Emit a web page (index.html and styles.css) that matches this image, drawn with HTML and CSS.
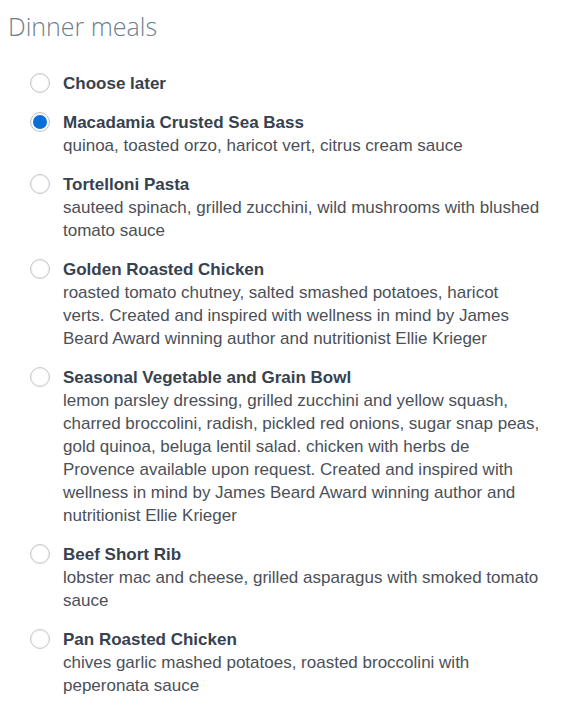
FILE: index.html
```html
<!DOCTYPE html>
<html>
<head>
<meta charset="utf-8">
<link rel="stylesheet" href="styles.css">
</head>
<body>
<h2 class="heading">Dinner meals</h2>
<div class="options">
  <label class="option">
    <span class="radio"></span>
    <span class="text"><span class="name">Choose later</span></span>
  </label>
  <label class="option">
    <span class="radio checked"></span>
    <span class="text"><span class="name">Macadamia Crusted Sea Bass</span><span class="desc">quinoa, toasted orzo, haricot vert, citrus cream sauce</span></span>
  </label>
  <label class="option">
    <span class="radio"></span>
    <span class="text"><span class="name">Tortelloni Pasta</span><span class="desc">sauteed spinach, grilled zucchini, wild mushrooms with blushed tomato sauce</span></span>
  </label>
  <label class="option">
    <span class="radio"></span>
    <span class="text"><span class="name">Golden Roasted Chicken</span><span class="desc">roasted tomato chutney, salted smashed potatoes, haricot verts. Created and inspired with wellness in mind by James Beard Award winning author and nutritionist Ellie Krieger</span></span>
  </label>
  <label class="option">
    <span class="radio"></span>
    <span class="text"><span class="name">Seasonal Vegetable and Grain Bowl</span><span class="desc">lemon parsley dressing, grilled zucchini and yellow squash, charred broccolini, radish, pickled red onions, sugar snap peas, gold quinoa, beluga lentil salad. chicken with herbs de Provence available upon request. Created and inspired with wellness in mind by James Beard Award winning author and nutritionist Ellie Krieger</span></span>
  </label>
  <label class="option">
    <span class="radio"></span>
    <span class="text"><span class="name">Beef Short Rib</span><span class="desc">lobster mac and cheese, grilled asparagus with smoked tomato sauce</span></span>
  </label>
  <label class="option">
    <span class="radio"></span>
    <span class="text"><span class="name">Pan Roasted Chicken</span><span class="desc">chives garlic mashed potatoes, roasted broccolini with peperonata sauce</span></span>
  </label>
</div>
</body>
</html>
```
FILE: styles.css
```css
html, body {
  background: #ffffff;
}
body {
  margin: 0;
  padding: 0 8px;
  font-family: "Liberation Sans", Arial, sans-serif;
}
.heading {
  margin: 0;
  padding-top: 11px;
  font-family: "Open Sans", "Liberation Sans", sans-serif;
  font-weight: 300;
  font-size: 25px;
  line-height: 30px;
  color: #6b7f8e;
}
.options {
  display: flex;
  flex-direction: column;
  gap: 16px;
  padding-left: 22px;
  margin-top: 30.5px;
}
.option {
  display: flex;
  align-items: flex-start;
  gap: 13px;
}
.radio {
  flex: none;
  box-sizing: border-box;
  width: 20px;
  height: 20px;
  margin-top: 1.5px;
  border-radius: 50%;
  border: 1px solid #c6c8cb;
  background: radial-gradient(circle at 50% 50%, #ffffff 55%, #eceef0 100%);
  box-shadow: inset 0 0 0 1px #f1f2f3;
  display: flex;
  align-items: center;
  justify-content: center;
}
.radio.checked {
  background: #ffffff;
  border-color: #bfc3c8;
}
.radio.checked::after {
  content: "";
  width: 14px;
  height: 14px;
  border-radius: 50%;
  background: #0a6fd8;
}
.text {
  display: flex;
  flex-direction: column;
  width: 478px;
  font-size: 17px;
  line-height: 23px;
}
.name {
  font-weight: bold;
  color: #36424f;
}
.desc {
  color: #4b5058;
}
```
